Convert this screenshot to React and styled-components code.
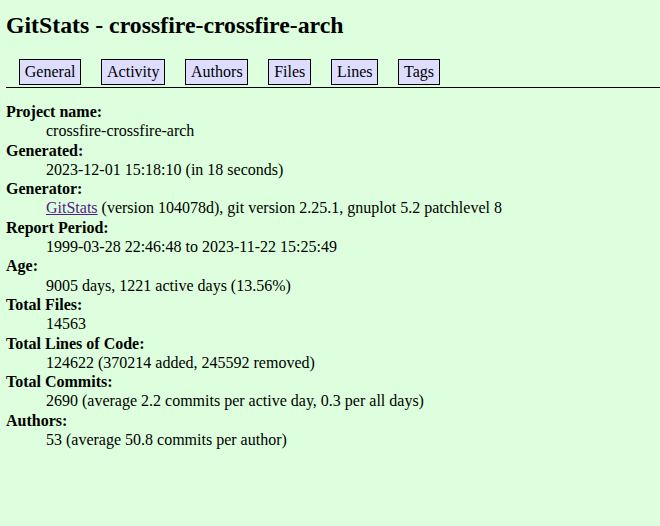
import React from "react";
import styled, { createGlobalStyle } from "styled-components";

const Global = createGlobalStyle`
  html, body {
    margin: 0;
    padding: 0;
    background-color: #dfd;
    color: black;
  }
  body {
    font-family: "Liberation Serif", "Times New Roman", serif;
    font-size: 16px;
  }
`;

const Page = styled.div`
  min-height: 526px;
  padding: 11px 0 0 6px;
  box-sizing: border-box;
  background-color: #dfd;
`;

const Title = styled.h1`
  margin: 0;
  font-size: 23.8px;
  line-height: 28px;
  font-weight: bold;
`;

const Nav = styled.ul`
  list-style: none;
  margin: 20px 0 0 0;
  padding: 0 0 2px 13px;
  display: flex;
  gap: 20px;
  border-bottom: 1px solid black;
`;

const NavItem = styled.li`
  display: block;
  white-space: nowrap;
`;

const Tab = styled.a`
  display: block;
  text-decoration: none;
  color: black;
  background-color: #ddf;
  border: 1px solid black;
  padding: 3px 0.3em;
  line-height: 18px;
  cursor: pointer;
`;

const DefList = styled.dl`
  margin: 14px 0 0 0;
  line-height: 19.3px;
`;

const Term = styled.dt`
  font-weight: bold;
`;

const Def = styled.dd`
  margin: 0 0 0 40px;
`;

const Link = styled.a`
  color: #551a8b;
  text-decoration: underline;
`;

const tabs = ["General", "Activity", "Authors", "Files", "Lines", "Tags"];

const items = [
  ["Project name", "crossfire-crossfire-arch"],
  ["Generated", "2023-12-01 15:18:10 (in 18 seconds)"],
  [
    "Generator",
    <>
      <Link href="#">GitStats</Link> (version 104078d), git version 2.25.1, gnuplot 5.2 patchlevel 8
    </>,
  ],
  ["Report Period", "1999-03-28 22:46:48 to 2023-11-22 15:25:49"],
  ["Age", "9005 days, 1221 active days (13.56%)"],
  ["Total Files", "14563"],
  ["Total Lines of Code", "124622 (370214 added, 245592 removed)"],
  ["Total Commits", "2690 (average 2.2 commits per active day, 0.3 per all days)"],
  ["Authors", "53 (average 50.8 commits per author)"],
];

export default function App() {
  return (
    <>
      <Global />
      <Page>
        <Title>GitStats - crossfire-crossfire-arch</Title>
        <Nav>
          {tabs.map((t) => (
            <NavItem key={t}>
              <Tab href="#">{t}</Tab>
            </NavItem>
          ))}
        </Nav>
        <DefList>
          {items.map(([k, v]) => (
            <React.Fragment key={k}>
              <Term>{k}:</Term>
              <Def>{v}</Def>
            </React.Fragment>
          ))}
        </DefList>
      </Page>
    </>
  );
}
